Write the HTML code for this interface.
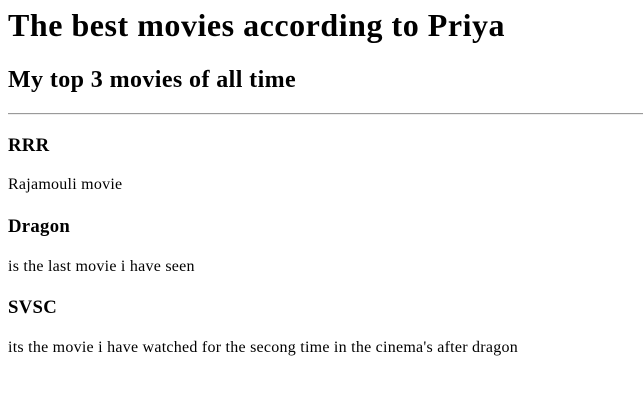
<!DOCTYPE html>
<html><head><meta charset="utf-8"><style>
html,body{margin:0;padding:0;background:#fff;width:643px;height:400px;overflow:hidden}
body{font-family:"Liberation Serif",serif;color:#000;position:relative}
.a{position:absolute;left:8px;margin:0;white-space:nowrap}
h1{font-size:32px;line-height:37px;font-weight:bold;letter-spacing:0.53px}
h2{font-size:24px;line-height:28px;font-weight:bold;letter-spacing:0.4px}
h3{font-size:18.72px;line-height:22px;font-weight:bold;letter-spacing:0.3px}
p{font-size:16px;line-height:18px;letter-spacing:0.25px}
hr{position:absolute;left:8px;width:635px;top:113px;margin:0;border:0;border-top:1px solid #9a9a9a;border-bottom:1px solid #eee;height:0}
</style></head><body>
<h1 class="a" style="top:7px">The best movies according to Priya</h1>
<h2 class="a" style="top:66px">My top 3 movies of all time</h2>
<hr>
<h3 class="a" style="top:135px">RRR</h3>
<p class="a" style="top:176px">Rajamouli movie</p>
<h3 class="a" style="top:216px">Dragon</h3>
<p class="a" style="top:258px">is the last movie i have seen</p>
<h3 class="a" style="top:297px">SVSC</h3>
<p class="a" style="top:339px">its the movie i have watched for the secong time in the cinema's after dragon</p>
</body></html>
